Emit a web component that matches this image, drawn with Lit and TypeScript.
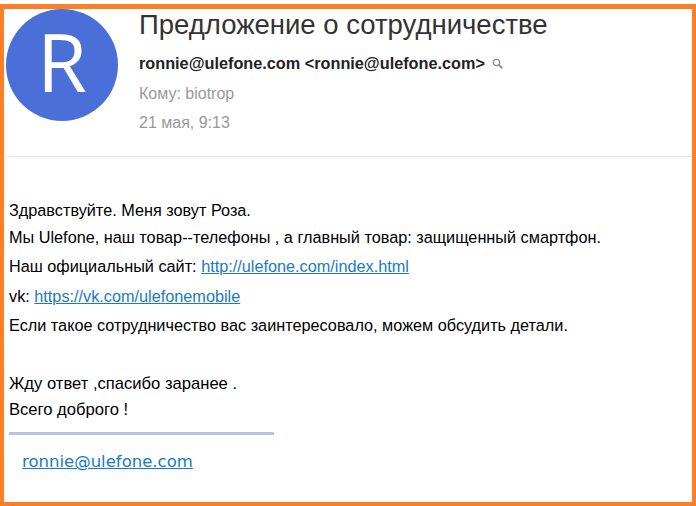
import { LitElement, html, css } from 'lit';
import { customElement } from 'lit/decorators.js';

@customElement('app-root')
export class AppRoot extends LitElement {
  static styles = css`
    :host {
      display: block;
      width: 696px;
      height: 506px;
      box-sizing: border-box;
      padding-top: 4px;
      background: #fff;
      font-family: 'Liberation Sans', Arial, sans-serif;
    }
    .frame {
      box-sizing: border-box;
      height: 502px;
      border: solid #ff7f27;
      border-width: 5px 4px 4px 4px;
      overflow: hidden;
    }
    .head {
      display: flex;
      gap: 21px;
      margin-left: 2px;
      height: 147px;
      border-bottom: 1px solid #e6e6e6;
    }
    .avatar {
      box-sizing: border-box;
      width: 112px;
      height: 112px;
      padding-bottom: 10px;
      border-radius: 50%;
      background: #4a6fd8;
      color: #fff;
      display: flex;
      align-items: center;
      justify-content: center;
      font: 500 81px 'Open Sans', sans-serif;
      flex: none;
    }
    .meta {
      display: flex;
      flex-direction: column;
    }
    .title {
      font-size: 27.5px;
      line-height: 30px;
      margin-top: 1px;
      color: #333;
    }
    .from {
      display: flex;
      align-items: center;
      gap: 7px;
      margin-top: 13px;
      font-size: 16.25px;
      line-height: 20px;
      font-weight: 700;
      color: #222;
    }
    .gray {
      font-size: 16px;
      line-height: 20px;
      color: #999;
    }
    .to {
      margin-top: 11px;
    }
    .date {
      margin-top: 9px;
    }
    .body {
      padding: 40px 0 0 5px;
      font-size: 16.25px;
      color: #000;
    }
    .line {
      height: 29.3px;
      line-height: 29.3px;
    }
    .tight {
      height: 26px;
      line-height: 26px;
    }
    .gap {
      margin-top: 30.8px;
    }
    .wide {
      font-size: 16.6px;
    }
    a {
      color: #1a7ac4;
    }
    .rule {
      width: 265px;
      height: 3px;
      margin-top: 9px;
      background: #b4c5e4;
    }
    .sign {
      margin: 17px 0 0 13px;
      font: 16.5px/20px 'DejaVu Sans', Verdana, sans-serif;
    }
  `;

  render() {
    return html`
      <div class="frame">
        <div class="head">
          <div class="avatar">R</div>
          <div class="meta">
            <div class="title">Предложение о сотрудничестве</div>
            <div class="from">
              <span>ronnie@ulefone.com &lt;ronnie@ulefone.com&gt;</span>
              <svg width="11" height="11" viewBox="0 0 11 11" fill="none" stroke="#8a8a8a">
                <circle cx="4.5" cy="4.5" r="3.2" stroke-width="1.2" />
                <path d="M7 7l3.2 3.2" stroke-width="1.8" />
              </svg>
            </div>
            <div class="gray to">Кому: biotrop</div>
            <div class="gray date">21 мая, 9:13</div>
          </div>
        </div>
        <div class="body">
          <div class="tight">Здравствуйте. Меня зовут Роза.</div>
          <div class="line">Мы Ulefone, наш товар--телефоны , а главный товар: защищенный смартфон.</div>
          <div class="line">Наш официальный сайт: <a href="#">http://ulefone.com/index.html</a></div>
          <div class="line">vk: <a href="#">https://vk.com/ulefonemobile</a></div>
          <div class="line">Если такое сотрудничество вас заинтересовало, можем обсудить детали.</div>
          <div class="tight gap wide">Жду ответ ,спасибо заранее .</div>
          <div class="tight wide">Всего доброго !</div>
          <div class="rule"></div>
          <div class="sign"><a href="#">ronnie@ulefone.com</a></div>
        </div>
      </div>
    `;
  }
}
